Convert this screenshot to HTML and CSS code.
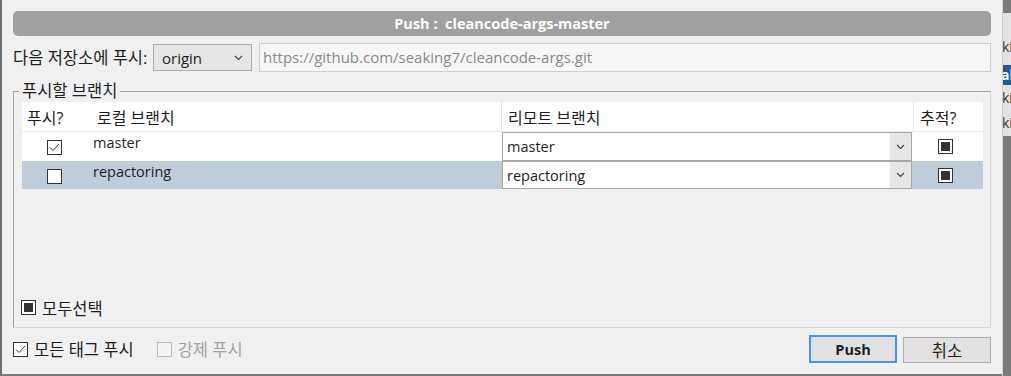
FILE: index.html
```html
<!DOCTYPE html>
<html lang="ko">
<head>
<meta charset="utf-8">
<title>Push</title>
<link rel="stylesheet" href="styles.css">
</head>
<body>
<div class="screen">
  <div class="edge-left"></div>
  <div class="dialog">
    <div class="titlebar">Push :&nbsp; cleancode-args-master</div>
    <div class="remote-row">
      <span class="label ko">다음 저장소에 푸시:</span>
      <div class="select"><span>origin</span><svg class="chev" width="9" height="6" viewBox="0 0 9 6"><path d="M1 1l3.5 3.5L8 1" fill="none" stroke="#444" stroke-width="1.2"/></svg></div>
      <div class="url">https://github.com/seaking7/cleancode-args.git</div>
    </div>
    <fieldset class="group">
      <legend class="ko">푸시할 브랜치</legend>
      <div class="table">
        <div class="cell head c1 ko">푸시?</div>
        <div class="cell head c2 ko">로컬 브랜치</div>
        <div class="cell head c3 sep ko">리모트 브랜치</div>
        <div class="cell head c4 sep ko">추적?</div>

        <div class="cell r1 c1 chk"><svg width="15" height="15" viewBox="0 0 15 15"><rect x="0.5" y="0.5" width="14" height="14" fill="#fff" stroke="#333"/><path d="M3 7.5l3 3 6-6.5" fill="none" stroke="#333" stroke-width="1"/></svg></div>
        <div class="cell r1 c2 name">master</div>
        <div class="cell r1 c3"><div class="combo"><span class="combo-text">master</span><span class="combo-btn"><svg width="9" height="6" viewBox="0 0 9 6"><path d="M1 1l3.5 3.5L8 1" fill="none" stroke="#444" stroke-width="1.2"/></svg></span></div></div>
        <div class="cell r1 c4 track"><svg width="15" height="15" viewBox="0 0 15 15"><rect x="0.5" y="0.5" width="14" height="14" fill="#fff" stroke="#333"/><rect x="3" y="3" width="9" height="9" fill="#333"/></svg></div>

        <div class="cell r2 c1 chk"><svg width="15" height="15" viewBox="0 0 15 15"><rect x="0.5" y="0.5" width="14" height="14" fill="#fff" stroke="#333"/></svg></div>
        <div class="cell r2 c2 name">repactoring</div>
        <div class="cell r2 c3"><div class="combo"><span class="combo-text">repactoring</span><span class="combo-btn"><svg width="9" height="6" viewBox="0 0 9 6"><path d="M1 1l3.5 3.5L8 1" fill="none" stroke="#444" stroke-width="1.2"/></svg></span></div></div>
        <div class="cell r2 c4 track"><svg width="15" height="15" viewBox="0 0 15 15"><rect x="0.5" y="0.5" width="14" height="14" fill="#fff" stroke="#333"/><rect x="3" y="3" width="9" height="9" fill="#333"/></svg></div>
      </div>
      <div class="select-all">
        <svg width="15" height="15" viewBox="0 0 15 15"><rect x="0.5" y="0.5" width="14" height="14" fill="#fff" stroke="#333"/><rect x="3" y="3" width="9" height="9" fill="#333"/></svg>
        <span class="ko">모두선택</span>
      </div>
    </fieldset>
    <div class="footer">
      <div class="opt">
        <svg width="15" height="15" viewBox="0 0 15 15"><rect x="0.5" y="0.5" width="14" height="14" fill="#fff" stroke="#333"/><path d="M3 7.5l3 3 6-6.5" fill="none" stroke="#333" stroke-width="1"/></svg>
        <span class="ko">모든 태그 푸시</span>
      </div>
      <div class="opt disabled">
        <svg width="15" height="15" viewBox="0 0 15 15"><rect x="0.5" y="0.5" width="14" height="14" fill="#f4f4f4" stroke="#bcbcbc"/></svg>
        <span class="ko">강제 푸시</span>
      </div>
      <div class="buttons">
        <button class="btn primary">Push</button>
        <button class="btn ko">취소</button>
      </div>
    </div>
  </div>
  <div class="edge-right">
    <div class="bg-panel">
      <div class="bg-line l1">ki</div>
      <div class="bg-line sel">ak</div>
      <div class="bg-line l3">ki</div>
      <div class="bg-line l4">ki</div>
    </div>
  </div>
</div>
</body>
</html>
```
FILE: styles.css
```css
* { box-sizing: border-box; }
html, body { margin: 0; padding: 0; }
body {
  width: 1011px;
  height: 376px;
  overflow: hidden;
  background: #7b7b7b;
  font-family: "Open Sans", "Noto Sans CJK KR", sans-serif;
  font-size: 14px;
  color: #1e1e1e;
}
.ko { font-size: 16.5px; }
.screen { display: flex; height: 376px; }
.edge-left { width: 2px; height: 376px; background: #6a7077; }
.dialog {
  width: 1000px;
  height: 374px;
  background: #f0f0f0;
  padding: 11px;
  display: flex;
  flex-direction: column;
}
.titlebar {
  height: 25px;
  flex: none;
  border-radius: 5px;
  background: #a0a0a0;
  color: #fff;
  font-weight: 700;
  text-align: center;
  line-height: 25px;
  font-size: 14.5px;
}
.remote-row {
  margin-top: 7px;
  height: 29px;
  flex: none;
  display: flex;
  align-items: center;
}
.label { width: 140px; white-space: nowrap; line-height: 20px; }
.select {
  width: 99px;
  height: 27px;
  border: 1px solid #adadad;
  background: #e5e5e5;
  display: flex;
  align-items: center;
  justify-content: space-between;
  padding: 0 8px 0 8px;
  font-size: 15px;
}
.url {
  margin-left: 7px;
  flex: 1;
  height: 29px;
  border: 1px solid #cfcfcf;
  background: #f7f7f7;
  color: #8a8a8a;
  padding-left: 3px;
  line-height: 27px;
  font-size: 15px;
}
.group {
  margin: 9px 0 0;
  padding: 1px 7px 12px 5px;
  border: 1px solid;
  border-color: #a3a3a3 #d6d6d6 #d6d6d6 #a3a3a3;
  flex: 1;
  min-height: 0;
  display: flex;
  flex-direction: column;
}
.group legend {
  padding: 0 3px;
  line-height: 20px;
  color: #1e1e1e;
}
.table {
  margin-left: 3px;
  display: grid;
  grid-template-columns: 64px 415px 412px 70px;
  grid-template-rows: 30px 29px 28px;
}
.cell { display: flex; align-items: center; font-size: 14px; }
.head { background: #fff; border-bottom: 1px solid #ececec; font-size: 16px; }
.head.c1 { padding-left: 5px; }
.head.c2 { padding-left: 11px; }
.head.c3, .head.c4 { padding-left: 6px; }
.sep { border-left: 1px solid #e6e6e6; }
.r1 { background: #fff; }
.r2 { background: #bfcddb; }
.chk { justify-content: center; padding-top: 2px; }
.name { padding-left: 7px; align-items: flex-start; padding-top: 1px; line-height: 20px; font-size: 14.5px; }
.track { padding-left: 25px; }
.c3 { padding: 0 1px; }
.combo {
  width: 100%;
  height: 100%;
  border: 1px solid #a8a8a8;
  background: #fff;
  display: flex;
  align-items: stretch;
  font-size: 14.5px;
}
.combo-text { flex: 1; padding-left: 4px; display: flex; align-items: center; }
.combo-btn {
  width: 21px;
  background: #e6e6e6;
  display: flex;
  align-items: center;
  justify-content: center;
}
.select-all {
  margin-top: auto;
  margin-left: 2px;
  display: flex;
  align-items: center;
  gap: 6px;
  height: 15px;
}
.select-all svg, .opt svg { flex: none; }
.footer {
  margin-top: 7px;
  height: 28px;
  flex: none;
  display: flex;
  align-items: center;
}
.opt { display: flex; align-items: center; gap: 6px; }
.opt.disabled { margin-left: 23px; color: #a3a3a3; }
.buttons { margin-left: auto; display: flex; align-items: flex-end; gap: 6px; height: 28px; }
.btn {
  width: 88px;
  height: 26px;
  border: 1px solid #adadad;
  background: #e1e1e1;
  font-family: "Open Sans", "Noto Sans CJK KR", sans-serif;
  color: #1e1e1e;
  padding: 0;
}
.btn.primary { height: 28px; border: 2px solid #4a92e2; font-weight: 700; font-size: 14.5px; }
.btn.ko { font-size: 16.5px; }
.edge-right { width: 9px; height: 376px; background: #7b7b7b; overflow: hidden; border-left: 1px solid #d0d0d0; }
.bg-panel { margin-top: 13px; height: 123px; background: #e3e3e3; padding-top: 24px; }
.bg-line { font-size: 14px; line-height: 20px; height: 20px; white-space: nowrap; color: #333; margin-left: -1px; }
.bg-line.sel { background: #1f5a94; color: #fff; font-weight: 700; margin: 8px 0 0 -2px; }
.bg-line.l3 { margin-top: 3px; }
.bg-line.l4 { margin-top: 5px; }
```
